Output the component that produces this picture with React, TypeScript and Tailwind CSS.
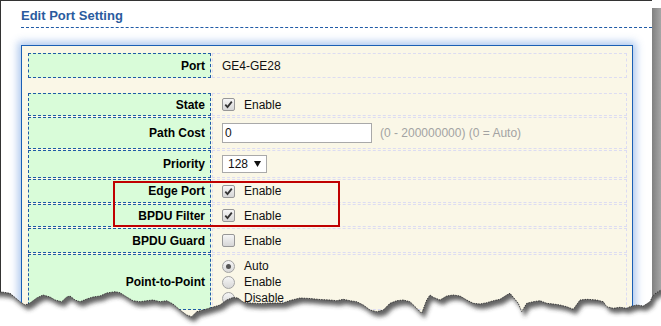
import React from "react";

const edge: [number, number][] = [
  [0, 291.7], [10, 293.3], [20, 301.7], [25, 305], [30, 303], [36.7, 298], [43, 295], [50, 297], [55, 300],
  [61.7, 301.7], [66.7, 297], [70, 296], [75, 300], [80, 301.7], [86.7, 299], [93, 297], [100, 296],
  [106.7, 293], [115, 291.7], [120, 292.7], [126.7, 297], [133, 300.7], [140, 301.7], [146.7, 300.7],
  [153, 300], [160, 301.7], [166.7, 300.7], [173, 304], [180, 310], [186.7, 315], [191.7, 316.7],
  [196.7, 311.7], [203, 310], [210, 308], [220, 305], [226.7, 300], [233, 297.5], [238, 298], [243, 302],
  [250, 303], [260, 303.5], [270, 303], [283, 303], [290, 300.5], [300, 298], [310, 298.5],
  [320, 299.5], [330, 300], [336.7, 300.7], [343.3, 299.3], [350, 300.7], [356.7, 301.7], [363.3, 305],
  [370, 310], [376.7, 311.7], [383.3, 310], [390, 303.3], [396.7, 300.7], [403.3, 300], [410, 301.7],
  [416.7, 308.3], [421.7, 313.3], [426.7, 300], [430, 295], [433.3, 297.3], [440, 300], [446.7, 296],
  [453.3, 295], [460, 296], [466.7, 300], [473.3, 303.3], [480, 304], [486.7, 302.7], [493.3, 300.7],
  [500, 299.3], [506.7, 295], [510, 293.3], [513.3, 297.3], [518.3, 303.3], [521.7, 311.7], [526.7, 303.3],
  [533.3, 301.7], [540, 300.7], [546.7, 303.3], [553.3, 304], [560, 305], [566.7, 306.7], [573.3, 309.3],
  [580, 300], [586.7, 299.3], [596.7, 300], [603.3, 301.7], [606.7, 306.7], [613.3, 308.3], [620, 307.3],
  [626.7, 308.3], [630, 306.7], [636.7, 305], [643.3, 306], [650, 301.7], [652.7, 296], [656, 293], [661, 290],
];

function TornEdge() {
  const pts = edge.map(([x, y]) => `${x},${y}`).join(" ");
  const below = `0,330 ${pts} 661,330`;
  const shifted = edge.map(([x, y]) => `${x + 3},${y + 5}`).join(" ");
  const above = `-20,-20 -20,${edge[0][1] + 5} ${shifted} 690,${edge[edge.length - 1][1] + 5} 690,-20`;
  return (
    <svg className="absolute left-0 top-0 pointer-events-none" width={661} height={326} viewBox="0 0 661 326">
      <defs>
        <clipPath id="belowEdge">
          <polygon points={below} />
        </clipPath>
        <filter id="edgeBlur" x={-50} y={-50} width={800} height={450} filterUnits="userSpaceOnUse">
          <feGaussianBlur stdDeviation={2.2} />
        </filter>
      </defs>
      <g clipPath="url(#belowEdge)">
        <rect x={0} y={0} width={661} height={326} fill="#ffffff" />
        <polygon points={above} fill="#3c3c3c" fillOpacity={0.8} filter="url(#edgeBlur)" />
      </g>
      <polyline points={pts} fill="none" stroke="#222" strokeWidth={0.8} strokeDasharray="1.5 1" />
    </svg>
  );
}

function Check({ checked }: { checked: boolean }) {
  return (
    <span className="w-[13px] h-[13px] shrink-0 rounded-[2px] border border-[#979797] bg-gradient-to-b from-[#f6f6f6] to-[#d6d6d6] flex items-center justify-center">
      {checked && (
        <svg width={9} height={9} viewBox="0 0 9 9">
          <path d="M1.3 4.6 L3.5 7 L7.8 1.6" stroke="#333" strokeWidth={1.8} fill="none" />
        </svg>
      )}
    </span>
  );
}

function Radio({ checked, label }: { checked: boolean; label: string }) {
  return (
    <div className="flex items-center h-[16px]">
      <span className="w-[13px] h-[13px] shrink-0 rounded-full border border-[#a3a3a3] bg-gradient-to-b from-[#f6f6f6] to-[#d8d8d8] flex items-center justify-center">
        {checked && <span className="w-[5px] h-[5px] rounded-full bg-[#555]" />}
      </span>
      <span className="ml-[9px]">{label}</span>
    </div>
  );
}

function CheckEnable({ checked }: { checked: boolean }) {
  return (
    <div className="flex items-center">
      <Check checked={checked} />
      <span className="ml-[9px]">Enable</span>
    </div>
  );
}

type Row = { label: string; h: string; content: React.ReactNode };

function Label({ children, h }: { children: React.ReactNode; h: string }) {
  return (
    <div className={`${h} flex items-center justify-end pr-[5px] border border-dashed border-[#1f5aa6] bg-[#d9fcd9] font-bold text-[12px] text-black`}>
      {children}
    </div>
  );
}

function Value({ children, h }: { children: React.ReactNode; h: string }) {
  return (
    <div className={`${h} flex items-center pl-[9px] border border-dashed border-[#dcdcf2] text-[12px] text-[#111]`}>
      {children}
    </div>
  );
}

function Table({ rows }: { rows: Row[] }) {
  return (
    <div className="grid grid-cols-[183px_415px] gap-x-px gap-y-px">
      {rows.map((r) => (
        <React.Fragment key={r.label}>
          <Label h={r.h}>{r.label}</Label>
          <Value h={r.h}>{r.content}</Value>
        </React.Fragment>
      ))}
    </div>
  );
}

export default function App() {
  const rows: Row[] = [
    { label: "State", h: "h-[23px]", content: <CheckEnable checked /> },
    {
      label: "Path Cost",
      h: "h-[32px]",
      content: (
        <div className="flex items-center">
          <div className="w-[150px] h-[20px] border border-[#a9a9a9] bg-white pl-[2px] flex items-center">0</div>
          <span className="ml-[8px] text-[#a3a3a3]">(0 - 200000000) (0 = Auto)</span>
        </div>
      ),
    },
    {
      label: "Priority",
      h: "h-[28px]",
      content: (
        <div className="w-[45px] h-[18px] border border-[#a9a9a9] bg-white pl-[5px] flex items-center">
          <span>128</span>
          <svg className="ml-[6px]" width={7} height={6} viewBox="0 0 7 6">
            <polygon points="0,0 7,0 3.5,6" fill="#111" />
          </svg>
        </div>
      ),
    },
    { label: "Edge Port", h: "h-[24px]", content: <CheckEnable checked /> },
    { label: "BPDU Filter", h: "h-[23px]", content: <CheckEnable checked /> },
    { label: "BPDU Guard", h: "h-[25px]", content: <CheckEnable checked={false} /> },
    {
      label: "Point-to-Point",
      h: "h-[56px]",
      content: (
        <div className="flex flex-col">
          <Radio checked label="Auto" />
          <Radio checked={false} label="Enable" />
          <Radio checked={false} label="Disable" />
        </div>
      ),
    },
  ];

  return (
    <div className="relative w-[661px] h-[326px] overflow-hidden bg-white flex font-['Liberation_Sans',Arial,sans-serif]">
      <div className="w-[652px] h-[326px] shrink-0 border-t border-l border-[#333] bg-white">
        <div className="ml-[20px] pt-[7px] pb-[4px] border-b border-dashed border-[#1f5aa6] text-[13px] leading-[15px] font-bold text-[#2a5b9e]">
          Edit Port Setting
        </div>
        <div className="ml-[20px] mt-[17px] w-[612px] border border-[#1a5fb4] bg-[#faf7e7] shadow-[0_0_8px_3px_rgba(70,130,215,0.45)] pt-[7px] pl-[6px] pr-[5px] pb-[20px]">
          <Table rows={[{ label: "Port", h: "h-[25px]", content: <span>GE4-GE28</span> }]} />
          <div className="mt-[15px]">
            <Table rows={rows} />
          </div>
        </div>
      </div>
      <div className="w-[9px] mt-[8px] h-[318px] bg-gradient-to-r from-[#808080] to-[#a6a6a6]" />
      <div className="absolute left-[113px] top-[181px] w-[227px] h-[46px] border-2 border-[#c00000]" />
      <TornEdge />
    </div>
  );
}
